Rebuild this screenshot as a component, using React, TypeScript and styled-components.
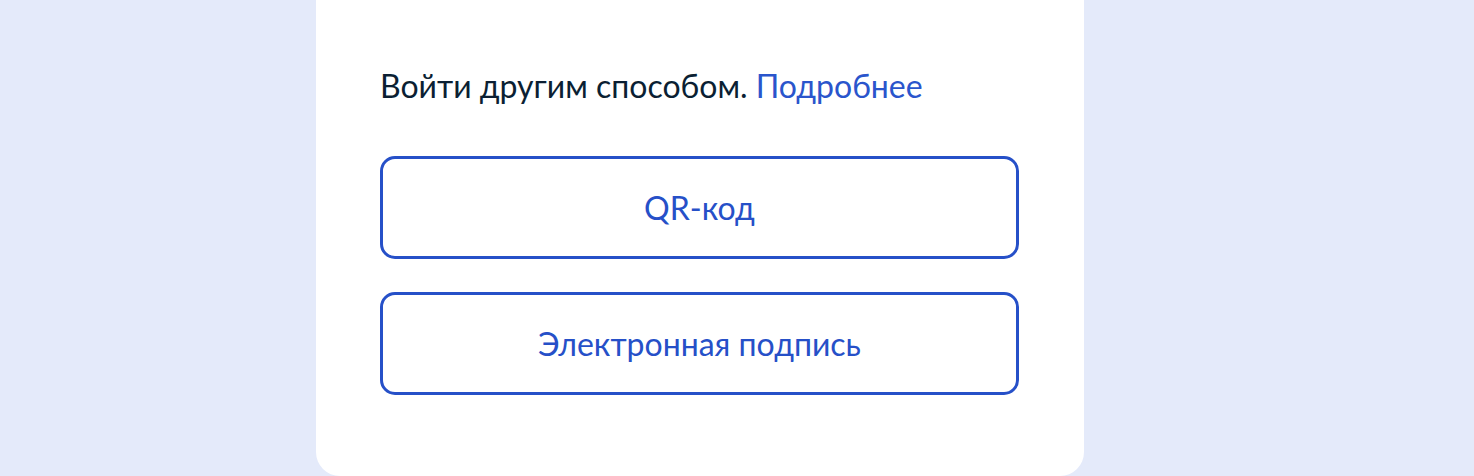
import { FC } from 'react';
import styled, { createGlobalStyle } from 'styled-components';

const GlobalStyle = createGlobalStyle`
  html, body {
    margin: 0;
    padding: 0;
    background: #e4eafa;
    overflow: hidden;
  }
  body {
    font-family: Lato, 'Noto Sans', sans-serif;
  }
`;

const Page = styled.div`
  display: flex;
  min-height: 476px;
  padding-left: 316px;
`;

const Card = styled.section`
  box-sizing: border-box;
  width: 768px;
  height: 476px;
  background: #ffffff;
  border-radius: 0 0 24px 24px;
  padding: 67px 65px 0 64px;
  display: flex;
  flex-direction: column;
`;

const Lead = styled.p`
  margin: 0 0 51px;
  font-size: 32px;
  line-height: 38px;
  color: #0b1f33;
`;

const MoreLink = styled.a`
  color: #2a55cc;
  text-decoration: none;
  cursor: pointer;
`;

const Methods = styled.div`
  display: flex;
  flex-direction: column;
  gap: 33px;
`;

const MethodButton = styled.button`
  box-sizing: border-box;
  height: 103px;
  width: 100%;
  background: #ffffff;
  border: 3px solid #2650c8;
  border-radius: 15px;
  font-family: inherit;
  font-size: 32px;
  color: #2650c8;
  cursor: pointer;
`;

const methods = ['QR-код', 'Электронная подпись'];

const App: FC = () => (
  <>
    <GlobalStyle />
    <Page>
      <Card>
        <Lead>
          Войти другим способом. <MoreLink>Подробнее</MoreLink>
        </Lead>
        <Methods>
          {methods.map((name) => (
            <MethodButton key={name}>{name}</MethodButton>
          ))}
        </Methods>
      </Card>
    </Page>
  </>
);

export default App;
